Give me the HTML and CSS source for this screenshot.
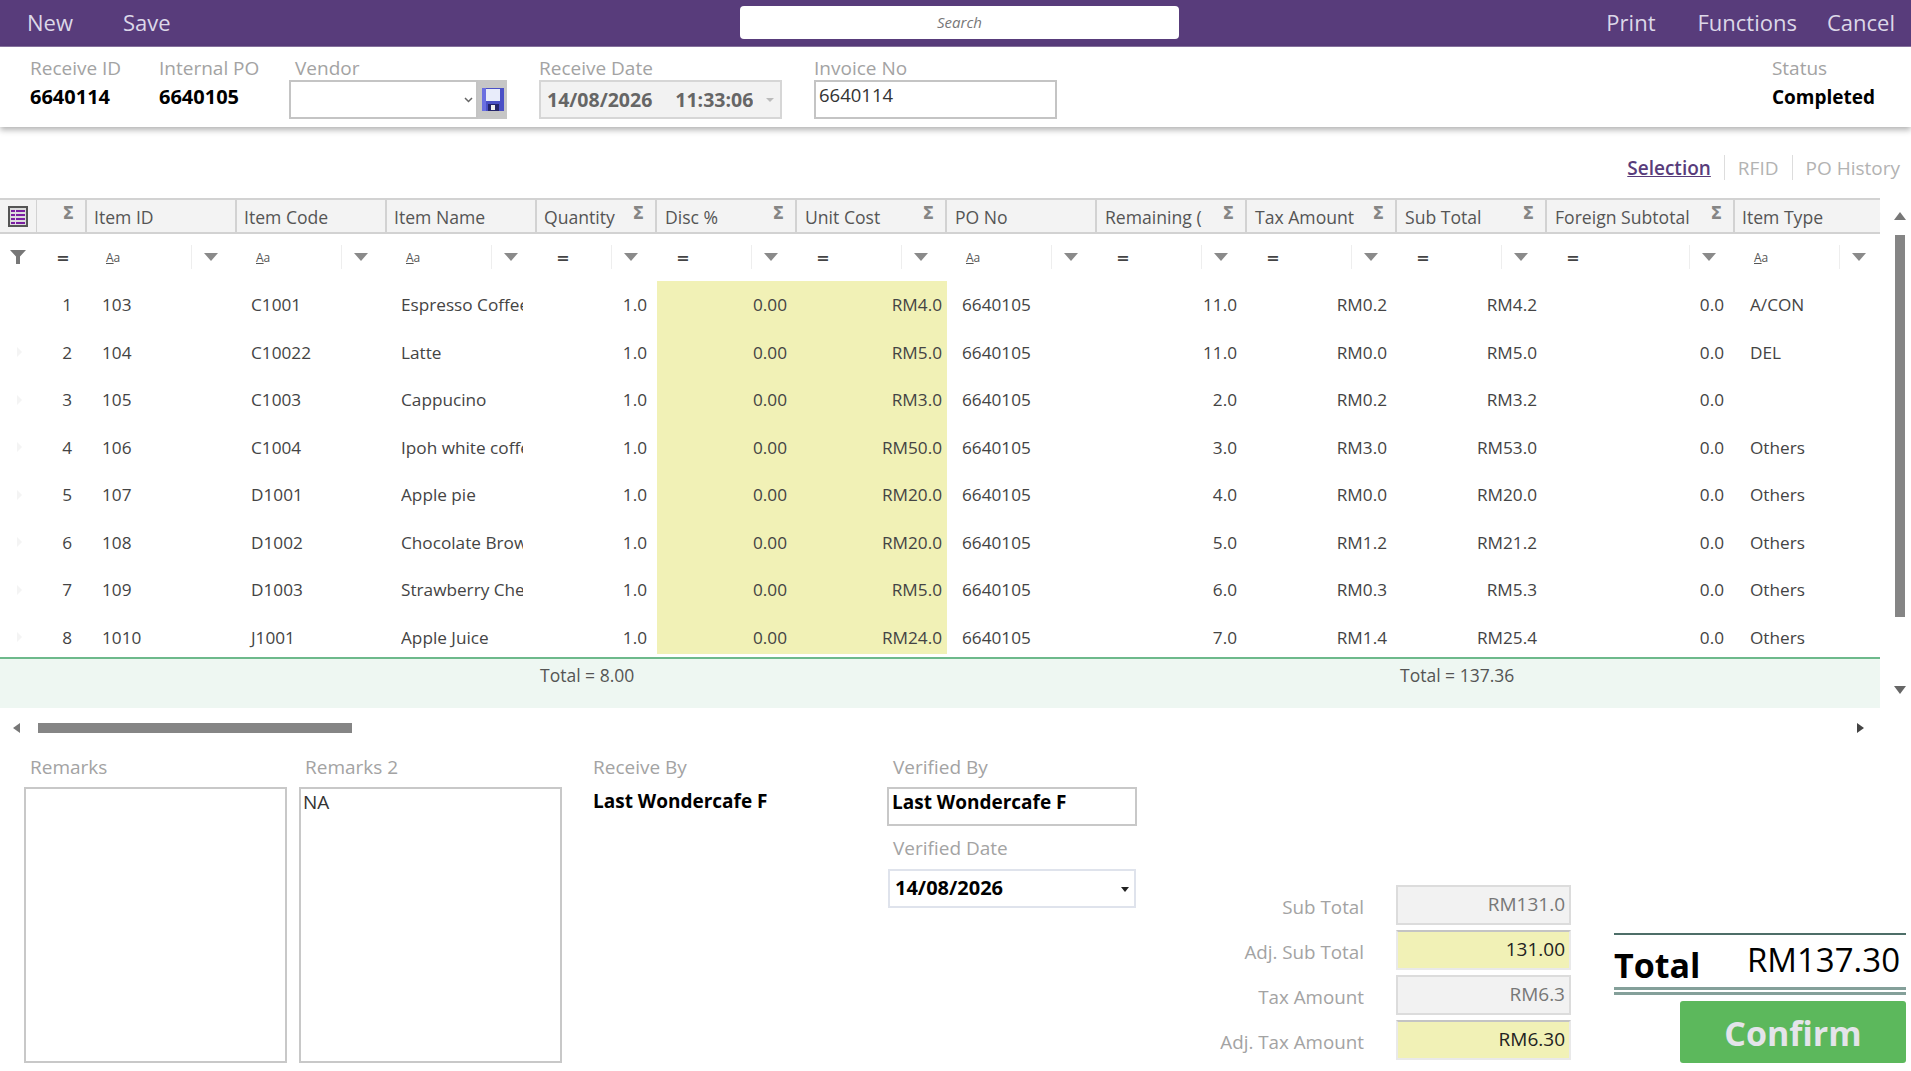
FILE: index.html
```html
<!DOCTYPE html>
<html lang="en">
<head>
  <meta charset="UTF-8" />
  <title>Receive Order</title>
  <link rel="stylesheet" href="styles.css">
</head>
<body>
  <div class="topbar">
    <div class="nav">
      <a>New</a>
      <a>Save</a>
    </div>
    <div class="search">Search</div>
    <div class="nav nav-right">
      <a>Print</a>
      <a>Functions</a>
      <a>Cancel</a>
    </div>
  </div>

  <div class="head">
    <div class="field f-receive">
      <label>Receive ID</label>
      <strong>6640114</strong>
    </div>
    <div class="field f-po">
      <label>Internal PO</label>
      <strong>6640105</strong>
    </div>
    <div class="field f-vendor">
      <label>Vendor</label>
      <div class="vendor">
        <div class="vendor-input">
          <svg width="9" height="6" viewBox="0 0 9 6"><path d="M1 1l3.5 3.5L8 1" fill="none" stroke="#666" stroke-width="1.5"/></svg>
        </div>
        <div class="save-btn">
          <svg width="22" height="23" viewBox="0 0 22 23">
            <path d="M0 0h22v23H0z" fill="#4a50c6"/>
            <path d="M4 1h14v12H4z" fill="#e8ecfa"/>
            <path d="M0 0h4v23H0z" fill="#6a6fe0"/>
            <path d="M6 16h11v7H6z" fill="#25256a"/>
            <path d="M9 17h4v5H9z" fill="#eee"/>
          </svg>
        </div>
      </div>
    </div>
    <div class="field f-date">
      <label>Receive Date</label>
      <div class="date-box">
        <span class="date-val">14/08/2026</span>
        <span class="time-val">11:33:06</span>
        <i class="arrow arrow-faint"></i>
      </div>
    </div>
    <div class="field f-invoice">
      <label>Invoice No</label>
      <div class="invoice">6640114</div>
    </div>
    <div class="field f-status">
      <label>Status</label>
      <strong>Completed</strong>
    </div>
  </div>

  <div class="tabs">
    <a class="active">Selection</a>
    <a>RFID</a>
    <a>PO History</a>
  </div>

  <div class="grid-wrap">
    <div class="grid">
      <div class="cols grid-header">
        <div class="hcell">
          <svg width="20" height="21" viewBox="0 0 20 21">
            <path d="M1 1h18v19H1z" fill="#dcdcdc" stroke="#555" stroke-width="2"/>
            <path d="M3 4h14v2H3zM3 8h14v2H3zM3 12h14v2H3zM3 16h14v2H3z" fill="#7b1fa2"/>
            <path d="M7 3h1v16H7z" fill="#e6d5ee"/>
          </svg>
        </div>
        <div class="hcell sig-only"><span class="sigma">Σ</span></div>
        <div class="hcell">Item ID</div>
        <div class="hcell">Item Code</div>
        <div class="hcell">Item Name</div>
        <div class="hcell">Quantity<span class="sigma">Σ</span></div>
        <div class="hcell">Disc %<span class="sigma">Σ</span></div>
        <div class="hcell">Unit Cost<span class="sigma">Σ</span></div>
        <div class="hcell">PO No</div>
        <div class="hcell"><span class="hclip">Remaining (Qty)</span><span class="sigma">Σ</span></div>
        <div class="hcell">Tax Amount<span class="sigma">Σ</span></div>
        <div class="hcell">Sub Total<span class="sigma">Σ</span></div>
        <div class="hcell">Foreign Subtotal<span class="sigma">Σ</span></div>
        <div class="hcell">Item Type</div>
      </div>

      <div class="cols grid-filter">
        <div class="fcell fcell-funnel">
          <svg width="16" height="14" viewBox="0 0 16 14"><path d="M0 0h16L10 6.5V14H6V6.5z" fill="#777"/></svg>
        </div>
        <div class="fcell"><b class="eq">=</b></div>
        <div class="fcell"><span class="aa"><u>A</u>a</span><span class="fdrop"><i class="arrow"></i></span></div>
        <div class="fcell"><span class="aa"><u>A</u>a</span><span class="fdrop"><i class="arrow"></i></span></div>
        <div class="fcell"><span class="aa"><u>A</u>a</span><span class="fdrop"><i class="arrow"></i></span></div>
        <div class="fcell"><b class="eq">=</b><span class="fdrop"><i class="arrow"></i></span></div>
        <div class="fcell"><b class="eq">=</b><span class="fdrop"><i class="arrow"></i></span></div>
        <div class="fcell"><b class="eq">=</b><span class="fdrop"><i class="arrow"></i></span></div>
        <div class="fcell"><span class="aa"><u>A</u>a</span><span class="fdrop"><i class="arrow"></i></span></div>
        <div class="fcell"><b class="eq">=</b><span class="fdrop"><i class="arrow"></i></span></div>
        <div class="fcell"><b class="eq">=</b><span class="fdrop"><i class="arrow"></i></span></div>
        <div class="fcell"><b class="eq">=</b><span class="fdrop"><i class="arrow"></i></span></div>
        <div class="fcell"><b class="eq">=</b><span class="fdrop"><i class="arrow"></i></span></div>
        <div class="fcell"><span class="aa"><u>A</u>a</span><span class="fdrop"><i class="arrow"></i></span></div>
      </div>

      <div class="grid-body" id="grid-body"></div>

      <div class="cols grid-total">
        <div class="total-qty">Total = 8.00</div>
        <div class="total-sub">Total = 137.36</div>
      </div>

      <div class="hscroll">
        <i class="sc-left"></i>
        <div class="hthumb"></div>
        <i class="sc-right"></i>
      </div>
    </div>

    <div class="vscroll">
      <i class="sc-up"></i>
      <div class="vthumb"></div>
      <i class="sc-down"></i>
    </div>
  </div>

  <div class="bottom">
    <div class="remark">
      <label>Remarks</label>
      <div class="remark-box"></div>
    </div>
    <div class="remark">
      <label>Remarks 2</label>
      <div class="remark-box">NA</div>
    </div>
    <div class="receive-by">
      <label>Receive By</label>
      <strong>Last Wondercafe F</strong>
    </div>
    <div class="verified">
      <label>Verified By</label>
      <div class="verified-box">Last Wondercafe F</div>
      <label class="verified-date">Verified Date</label>
      <div class="verified-select">14/08/2026<i class="arrow arrow-dark"></i></div>
    </div>
    <div class="summary">
      <div class="sum-row"><label>Sub Total</label><div class="sum-box">RM131.0</div></div>
      <div class="sum-row"><label>Adj. Sub Total</label><div class="sum-box edit">131.00</div></div>
      <div class="sum-row"><label>Tax Amount</label><div class="sum-box">RM6.3</div></div>
      <div class="sum-row"><label>Adj. Tax Amount</label><div class="sum-box edit">RM6.30</div></div>
    </div>
    <div class="grand">
      <div class="grand-line">
        <strong>Total</strong>
        <span>RM137.30</span>
      </div>
      <button class="confirm-btn">Confirm</button>
    </div>
  </div>

  <script>
    const items = [
      ['1', '103', 'C1001', 'Espresso Coffee', '11.0', 'RM4.0', 'RM0.2', 'RM4.2', 'A/CON'],
      ['2', '104', 'C10022', 'Latte', '11.0', 'RM5.0', 'RM0.0', 'RM5.0', 'DEL'],
      ['3', '105', 'C1003', 'Cappucino', '2.0', 'RM3.0', 'RM0.2', 'RM3.2', ''],
      ['4', '106', 'C1004', 'Ipoh white coffee', '3.0', 'RM50.0', 'RM3.0', 'RM53.0', 'Others'],
      ['5', '107', 'D1001', 'Apple pie', '4.0', 'RM20.0', 'RM0.0', 'RM20.0', 'Others'],
      ['6', '108', 'D1002', 'Chocolate Brownie', '5.0', 'RM20.0', 'RM1.2', 'RM21.2', 'Others'],
      ['7', '109', 'D1003', 'Strawberry Cheesecake', '6.0', 'RM5.0', 'RM0.3', 'RM5.3', 'Others'],
      ['8', '1010', 'J1001', 'Apple Juice', '7.0', 'RM24.0', 'RM1.4', 'RM25.4', 'Others']
    ];

    const body = document.getElementById('grid-body');
    items.forEach(it => {
      const row = document.createElement('div');
      row.className = 'cols grid-row';
      row.innerHTML = `
        <div class="cell"><i class="row-mark"></i></div>
        <div class="cell num">${it[0]}</div>
        <div class="cell">${it[1]}</div>
        <div class="cell">${it[2]}</div>
        <div class="cell"><span class="clip">${it[3]}</span></div>
        <div class="cell num">1.0</div>
        <div class="cell num yellow">0.00</div>
        <div class="cell num yellow tight">${it[5]}</div>
        <div class="cell">6640105</div>
        <div class="cell num">${it[4]}</div>
        <div class="cell num">${it[6]}</div>
        <div class="cell num">${it[7]}</div>
        <div class="cell num">0.0</div>
        <div class="cell">${it[8]}</div>
      `;
      body.appendChild(row);
    });
  </script>
</body>
</html>
```
FILE: styles.css
```css
* {
  box-sizing: border-box;
}
html, body {
  margin: 0;
  height: 1071px;
  overflow: hidden;
}
body {
  font-family: "Open Sans", "Noto Sans", sans-serif;
  font-size: 17.2px;
  color: #444;
  background-color: #fff;
}
label {
  display: block;
  font-size: 19px;
  line-height: 24px;
  color: #a3a3a3;
}
strong {
  color: #000;
  font-weight: 700;
}

/* top bar */
.topbar {
  height: 47px;
  background-color: #583c7b;
  border-bottom: 1px solid #8a76a3;
  display: flex;
  align-items: center;
  padding: 0 16px 0 27px;
}
.nav {
  flex: 1;
  display: flex;
  gap: 50px;
  margin-top: -2px;
  font-size: 22px;
  color: #dcd8e8;
}
.nav-right {
  justify-content: flex-end;
  gap: 42px;
}
.nav-right a:last-child {
  margin-left: -12px;
}
.search {
  width: 439px;
  height: 33px;
  margin: -2px 0 0 -3px;
  background-color: #fff;
  border-radius: 4px;
  color: #777;
  font-size: 15px;
  font-style: italic;
  text-align: center;
  line-height: 33px;
}

/* head panel */
.head {
  height: 80px;
  display: flex;
  position: relative;
  padding: 9px 0 0 30px;
  background-color: #fff;
  box-shadow: 0 3px 6px rgba(0,0,0,0.3);
}
.field strong {
  display: block;
  font-size: 19px;
  line-height: 24px;
  margin-top: 5px;
}
.f-receive strong,
.f-po strong {
  font-size: 20px;
}
.f-receive { width: 129px; }
.f-po { width: 130px; }
.f-vendor { width: 250px; }
.f-vendor label { padding-left: 6px; }
.f-date { width: 275px; }
.f-status {
  margin-left: auto;
  margin-right: 36px;
}
.vendor {
  display: flex;
  height: 39px;
}
.vendor-input {
  width: 189px;
  border: 2px solid #c4c4c4;
  display: flex;
  align-items: center;
  justify-content: flex-end;
  padding-right: 3px;
}
.save-btn {
  width: 29px;
  background-color: #c6c6c6;
  display: flex;
  align-items: center;
  justify-content: center;
}
.date-box {
  width: 243px;
  height: 39px;
  background-color: #f2f2f2;
  border: 2px solid #d6d6d6;
  padding-left: 6px;
  display: flex;
  align-items: center;
  font-weight: 700;
  font-size: 19.5px;
  color: #666;
  white-space: nowrap;
}
.time-val {
  margin-left: 23px;
  width: 78px;
  overflow: hidden;
}
.invoice {
  width: 243px;
  height: 39px;
  border: 2px solid #c4c4c4;
  padding: 0 3px;
  font-size: 18.5px;
  color: #333;
}

/* small icons */
.arrow {
  display: block;
  width: 0;
  height: 0;
  border-left: 7px solid transparent;
  border-right: 7px solid transparent;
  border-top: 8px solid #8a8a8a;
}
.arrow-faint {
  margin-left: 13px;
  border-left-width: 4px;
  border-right-width: 4px;
  border-top: 4px solid #bbb;
}
.arrow-dark {
  margin-left: auto;
  border-left-width: 4px;
  border-right-width: 4px;
  border-top: 5px solid #222;
}

/* tabs */
.tabs {
  height: 71px;
  padding: 28px 11px 0 0;
  display: flex;
  justify-content: flex-end;
}
.tabs a {
  height: 25px;
  padding: 0 13px;
  border-left: 1px solid #ddd;
  font-size: 19px;
  line-height: 27px;
  color: #b3b3b3;
}
.tabs a:last-child {
  padding-right: 0;
}
.tabs a.active {
  border-left: none;
  color: #583c7b;
  font-weight: 600;
  text-decoration: underline;
}

/* grid */
.grid-wrap {
  display: flex;
}
.grid {
  width: 1880px;
  overflow: hidden;
}
.cols {
  display: grid;
  grid-template-columns: 37px 50px 150px 150px 150px 120px 140px 150px 150px 150px 150px 150px 188px 150px;
}
.grid-header {
  height: 36px;
  background-color: #f3f3f3;
  border-top: 2px solid #d2d2d2;
  border-bottom: 2px solid #d2d2d2;
}
.hcell {
  display: flex;
  align-items: center;
  padding: 1px 11px 0 7px;
  border-right: 2px solid #d2d2d2;
  font-size: 17.6px;
  color: #555;
  white-space: nowrap;
  overflow: hidden;
}
.hcell:nth-child(n+7) {
  padding-left: 8px;
}
.hcell:last-child {
  padding-left: 7px;
}
.hcell:first-child {
  padding: 0 0 0 8px;
  border-right-width: 1px;
}
.hcell svg {
  flex-shrink: 0;
}
.hclip {
  display: block;
  width: 97px;
  overflow: hidden;
}
.sigma {
  margin-left: auto;
  margin-top: -7px;
  font-family: "DejaVu Sans", sans-serif;
  font-weight: 700;
  font-size: 17px;
  color: #858585;
}
.grid-filter {
  height: 47px;
}
.fcell {
  display: flex;
  align-items: center;
  padding-bottom: 1px;
  padding-left: 19px;
}
.fcell-funnel {
  padding-left: 10px;
}
.eq {
  width: 14px;
  text-align: center;
  font-family: "DejaVu Sans", sans-serif;
  font-size: 16px;
  color: #444;
}
.aa {
  width: 14px;
  font-size: 12px;
  color: #555;
}
.fdrop {
  margin-left: auto;
  width: 46px;
  height: 24px;
  border-left: 1px solid #eee;
  padding-left: 12px;
  display: flex;
  align-items: center;
}
.grid-body {
  height: 373px;
  overflow: hidden;
}
.grid-row {
  height: 47.5px;
}
.cell {
  display: flex;
  align-items: center;
  padding: 0 14px;
  white-space: nowrap;
  overflow: hidden;
  color: #444;
}
.cell:nth-child(3) {
  padding-left: 15px;
}
.cell:nth-child(9),
.cell:nth-child(14) {
  padding-left: 15px;
}
.num {
  justify-content: flex-end;
}
.cell:nth-child(2) {
  padding-right: 15px;
}
.cell:nth-child(13) {
  padding-right: 11px;
}
.cell:nth-child(6),
.cell:nth-child(7),
.cell:nth-child(10),
.cell:nth-child(11),
.cell:nth-child(12) {
  padding-right: 10px;
}
.yellow {
  background-color: #f1f1b6;
}
.tight {
  padding-right: 5px;
}
.clip {
  display: block;
  width: 122px;
  overflow: hidden;
}
.row-mark {
  display: block;
  width: 0;
  height: 0;
  margin-left: 3px;
  border-top: 5px solid transparent;
  border-bottom: 5px solid transparent;
  border-left: 5px solid #f4f4f4;
}
.grid-row:first-child .row-mark {
  display: none;
}
.grid-total {
  margin-top: 3px;
  height: 51px;
  background-color: #eef7f2;
  border-top: 2px solid #6db98b;
  font-size: 17.5px;
  line-height: 32px;
  color: #555;
}
.total-qty {
  grid-column: 6;
  padding-left: 3px;
}
.total-sub {
  grid-column: 12;
  padding-left: 3px;
}
.hscroll {
  height: 42px;
  padding: 15px 16px 0 13px;
  display: flex;
  align-items: flex-start;
}
.hthumb {
  width: 314px;
  height: 10px;
  margin-left: 18px;
  background-color: #858585;
}
.sc-left, .sc-right, .sc-up, .sc-down {
  display: block;
  width: 0;
  height: 0;
}
.sc-left {
  border-top: 5px solid transparent;
  border-bottom: 5px solid transparent;
  border-right: 7px solid #777;
}
.sc-right {
  margin-left: auto;
  border-top: 5px solid transparent;
  border-bottom: 5px solid transparent;
  border-left: 7px solid #444;
}
.vscroll {
  width: 31px;
  padding: 14px 0 0 14px;
}
.sc-up {
  border-left: 6px solid transparent;
  border-right: 6px solid transparent;
  border-bottom: 8px solid #777;
}
.sc-down {
  margin-top: 69px;
  border-left: 6px solid transparent;
  border-right: 6px solid transparent;
  border-top: 8px solid #666;
}
.vthumb {
  width: 10px;
  height: 382px;
  margin: 15px 0 0 1px;
  background-color: #858585;
}

/* bottom area */
.bottom {
  height: 321px;
  padding: 5px 5px 0 24px;
  display: flex;
  align-items: flex-start;
}
.bottom label {
  padding-left: 6px;
}
.remark {
  width: 263px;
  margin-right: 12px;
}
.remark-box {
  height: 276px;
  margin-top: 8px;
  border: 2px solid #c8c8c8;
  padding: 0 2px;
  font-size: 19px;
  color: #333;
}
.receive-by {
  width: 294px;
  margin-left: 19px;
}
.receive-by label {
  padding-left: 0;
}
.receive-by strong {
  display: block;
  margin-top: 9px;
  font-size: 19px;
}
.verified {
  width: 250px;
}
.verified-box {
  height: 39px;
  margin-top: 8px;
  border: 2px solid #c8c8c8;
  padding: 0 3px;
  font-size: 19px;
  font-weight: 700;
  color: #000;
}
.verified .verified-date {
  margin-top: 10px;
}
.verified-select {
  width: 248px;
  height: 39px;
  margin: 9px 0 0 1px;
  border: 2px solid #dfe3ec;
  padding: 0 5px 2px;
  display: flex;
  align-items: center;
  font-size: 20px;
  font-weight: 700;
  color: #000;
}
.verified-select .arrow {
  margin-top: 3px;
}
.summary {
  margin-top: 130px;
}
.sum-row {
  display: flex;
  align-items: center;
  margin-bottom: 5px;
}
.bottom .sum-row label {
  width: 227px;
  padding: 3px 0 0;
  font-size: 18.8px;
  text-align: right;
}
.sum-box {
  width: 175px;
  height: 40px;
  margin-left: 32px;
  background-color: #f2f2f2;
  border: 2px solid #dcdcdc;
  padding-right: 4px;
  text-align: right;
  font-size: 19px;
  line-height: 34px;
  color: #777;
}
.sum-box.edit {
  background-color: #f1f1b6;
  border-color: #e9e9e9;
  border-top-color: #c4c4c4;
  color: #222;
}
.grand {
  width: 292px;
  margin: 178px 0 0 43px;
  border-top: 2px solid #4d6e68;
  display: flex;
  flex-direction: column;
}
.grand-line {
  height: 60px;
  padding: 0 6px 0 0;
  border-bottom: 8px double #84a09a;
  display: flex;
  justify-content: space-between;
  align-items: flex-end;
  color: #000;
}
.grand-line strong {
  font-size: 34px;
  line-height: 48px;
  margin-bottom: -2px;
}
.grand-line span {
  font-size: 33px;
  line-height: 50px;
  margin-bottom: 2px;
}
.confirm-btn {
  width: 226px;
  height: 62px;
  margin: 6px 0 0 auto;
  padding: 2px 0 0;
  background-color: #5cb85c;
  border: none;
  border-radius: 3px;
  font-family: inherit;
  font-size: 34px;
  font-weight: 700;
  color: #e4e4ea;
}
```
